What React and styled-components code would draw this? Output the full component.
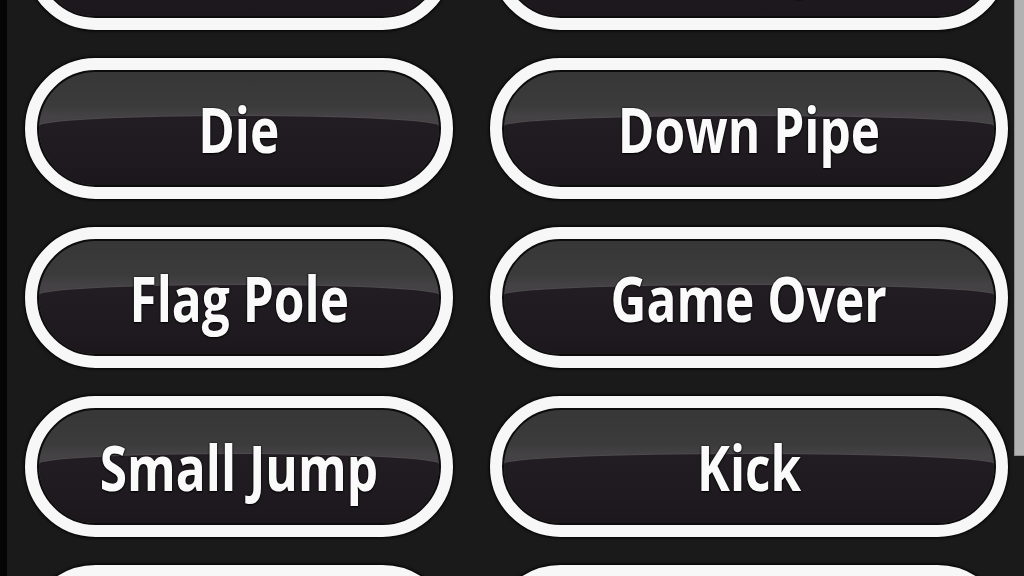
import React from 'react';
import { styled, createGlobalStyle } from 'styled-components';

const sounds = [
	'Coin', 'Bump',
	'Die', 'Down Pipe',
	'Flag Pole', 'Game Over',
	'Small Jump', 'Kick',
	'Power Up', 'Stomp',
];

function App() {
	return (
		<>
			<GlobalStyle />
			<StScreen>
				<StGrid>
					{sounds.map(name => (
						<StSoundBtn key={name}>
							<StFace>
								<StLabel>{name}</StLabel>
							</StFace>
						</StSoundBtn>
					))}
				</StGrid>
				<StScrollThumb />
			</StScreen>
		</>
	);
}

export default App;

const GlobalStyle = createGlobalStyle`
	html, body {
		margin: 0;
		padding: 0;
		background: #1b1a1b;
		overflow: hidden;
	}
	#root {
		height: 576px;
	}
`;

const StScreen = styled.div`
	position: relative;
	height: 576px;
	overflow: hidden;
	border-left: 7px solid #050505;
	padding-left: 18px;
	background: #1b1a1b;
`;

const StGrid = styled.div`
	display: grid;
	grid-template-columns: 428px 518px;
	column-gap: 37px;
	row-gap: 28px;
	grid-auto-rows: 141px;
	margin-top: -111px;
`;

const StSoundBtn = styled.button`
	display: flex;
	box-sizing: border-box;
	height: 141px;
	padding: 2px;
	border: 12px solid #f7f7f7;
	border-radius: 999px;
	background: #0d0c0d;
	box-shadow: 0 0 3px 1px #000;
	cursor: pointer;
`;

const StFace = styled.div`
	position: relative;
	flex: 1;
	display: flex;
	align-items: center;
	justify-content: center;
	border-radius: 999px;
	overflow: hidden;
	background: linear-gradient(#383738 0%, #3c3b3c 30%, #444244 39%);

	&::after {
		content: '';
		position: absolute;
		left: 0;
		right: 0;
		top: 39%;
		bottom: 0;
		border-radius: 50% 50% 0 0 / 10px 10px 0 0;
		background: linear-gradient(#221d22, #1f1a1f 60%, #1b171b);
		box-shadow: 0 -1px 1px rgba(110, 105, 110, 0.25);
	}
`;

const StLabel = styled.span`
	position: relative;
	z-index: 1;
	font-family: 'Open Sans', 'DejaVu Sans', sans-serif;
	font-weight: 700;
	font-size: 62px;
	line-height: 1;
	color: #fbfafb;
	white-space: nowrap;
	transform: scaleX(0.8);
	text-shadow: 0 1px 2px #000, 0 0 2px #000;
`;

const StScrollThumb = styled.div`
	position: absolute;
	top: 0;
	right: 0;
	width: 9px;
	height: 455px;
	background: #b2b2b2;
	border-left: 1px solid #8e8e8e;
	border-bottom: 1px solid #8e8e8e;
`;
